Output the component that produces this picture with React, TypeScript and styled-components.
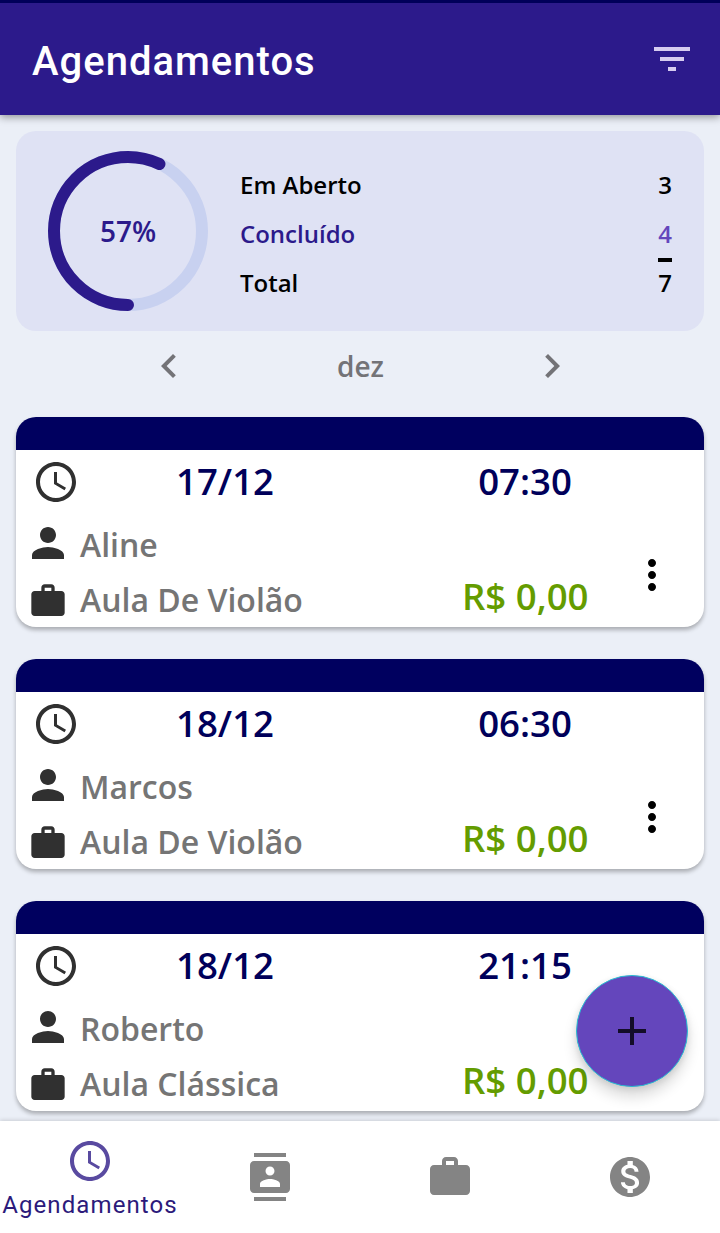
import React from "react";
import styled, { createGlobalStyle } from "styled-components";

const GlobalStyle = createGlobalStyle`
  * { box-sizing: border-box; }
  body { margin: 0; background: #ebeff7; }
  button { border: 0; padding: 0; background: none; color: inherit; font: inherit; }
`;

const icons = {
  clock:
    "M11.99 2C6.47 2 2 6.48 2 12s4.47 10 9.99 10C17.52 22 22 17.52 22 12S17.52 2 11.99 2zM12 20c-4.42 0-8-3.58-8-8s3.58-8 8-8 8 3.58 8 8-3.58 8-8 8zm.5-13H11v6l5.25 3.15.75-1.23-4.5-2.67z",
  person:
    "M12 12c2.21 0 4-1.79 4-4s-1.79-4-4-4-4 1.79-4 4 1.79 4 4 4zm0 2c-2.67 0-8 1.34-8 4v2h16v-2c0-2.66-5.33-4-8-4z",
  work:
    "M20 6h-4V4c0-1.11-.89-2-2-2h-4c-1.11 0-2 .89-2 2v2H4c-1.11 0-2 .89-2 2v11c0 1.11.89 2 2 2h16c1.11 0 2-.89 2-2V8c0-1.11-.89-2-2-2zm-6 0h-4V4h4v2z",
  contacts:
    "M20 0H4v2h16V0zM4 24h16v-2H4v2zM20 4H4c-1.1 0-2 .9-2 2v12c0 1.1.9 2 2 2h16c1.1 0 2-.9 2-2V6c0-1.1-.9-2-2-2zm-8 2.75c1.24 0 2.25 1.01 2.25 2.25s-1.01 2.25-2.25 2.25S9.75 10.24 9.75 9 10.76 6.75 12 6.75zM17 17H7v-1.5c0-1.67 3.33-2.5 5-2.5s5 .83 5 2.5V17z",
  money:
    "M12 2C6.48 2 2 6.48 2 12s4.48 10 10 10 10-4.48 10-10S17.52 2 12 2zm1.41 16.09V20h-2.67v-1.93c-1.71-.36-3.16-1.46-3.27-3.4h1.96c.1 1.05.82 1.87 2.65 1.87 1.96 0 2.4-.98 2.4-1.59 0-.83-.44-1.61-2.67-2.14-2.48-.6-4.18-1.62-4.18-3.67 0-1.72 1.39-2.84 3.11-3.21V4h2.67v1.95c1.86.45 2.79 1.86 2.85 3.39H14.3c-.05-1.11-.64-1.87-2.22-1.87-1.5 0-2.4.68-2.4 1.64 0 .84.65 1.39 2.67 1.91s4.18 1.39 4.18 3.91c-.01 1.83-1.38 2.83-3.12 3.16z",
  more:
    "M12 8c1.1 0 2-.9 2-2s-.9-2-2-2-2 .9-2 2 .9 2 2 2zm0 2c-1.1 0-2 .9-2 2s.9 2 2 2 2-.9 2-2-.9-2-2-2zm0 6c-1.1 0-2 .9-2 2s.9 2 2 2 2-.9 2-2-.9-2-2-2z",
  filter: "M10 18h4v-2h-4v2zM3 6v2h18V6H3zm3 7h12v-2H6v2z",
  add: "M19 13h-6v6h-2v-6H5v-2h6V5h2v6h6v2z",
  left: "M15.41 7.41L14 6l-6 6 6 6 1.41-1.41L10.83 12z",
  right: "M10 6L8.59 7.41 13.17 12l-4.58 4.59L10 18l6-6z",
};

const Glyph = styled.svg`
  display: block;
  flex: none;
  fill: currentColor;
`;

function Icon({ name, size = 48 }: { name: keyof typeof icons; size?: number }) {
  return (
    <Glyph width={size} height={size} viewBox="0 0 24 24" aria-hidden="true">
      <path d={icons[name]} />
    </Glyph>
  );
}

const Screen = styled.div`
  position: relative;
  display: flex;
  flex-direction: column;
  width: 720px;
  height: 1233px;
  overflow: hidden;
  background: #ebeff7;
  font-family: "Open Sans", sans-serif;
  font-weight: 600;
`;

const AppBar = styled.header`
  display: flex;
  flex: none;
  align-items: center;
  justify-content: space-between;
  height: 115px;
  padding: 0 24px 0 32px;
  border-top: 3px solid #00005a;
  background: #2c1a8b;
  color: #d6ccf0;
  box-shadow: 0 2px 8px rgba(0, 0, 0, 0.4);
`;

const Title = styled.h1`
  margin: 0;
  padding-top: 5px;
  color: #fff;
  font: 500 40px/48px Roboto, sans-serif;
  letter-spacing: 1px;
`;

const Content = styled.main`
  flex: 1;
  min-height: 0;
  padding: 16px 16px 0;
  overflow: hidden;
`;

const Summary = styled.section`
  display: flex;
  align-items: center;
  gap: 32px;
  height: 200px;
  padding: 0 32px;
  border-radius: 20px;
  background: #dfe2f4;
`;

const Ring = styled.div`
  display: grid;
  width: 160px;
  height: 160px;
  place-items: center;

  > * {
    grid-area: 1 / 1;
  }
`;

const Percent = styled.span`
  color: #2c1a8b;
  font-size: 28px;
  line-height: 38px;
`;

const Totals = styled.dl`
  flex: 1;
  margin: 0;
  padding-top: 5px;
`;

const TotalRow = styled.div<{ $color?: string }>`
  display: flex;
  justify-content: space-between;
  height: 49px;
  color: ${(p) => p.$color ?? "#000"};
  font-size: 24px;
  line-height: 49px;
`;

const Amount = styled.dd<{ $color?: string; $ruled?: boolean }>`
  margin: 0;
  color: ${(p) => p.$color ?? "inherit"};

  &::before {
    content: "";
    display: ${(p) => (p.$ruled ? "block" : "none")};
    height: 4px;
    margin-bottom: -4px;
    background: #000;
  }
`;

const MonthPicker = styled.nav`
  display: flex;
  align-items: center;
  justify-content: space-between;
  height: 86px;
  padding: 0 128px 16px 129px;
  color: #737377;
  font-size: 28px;
`;

const CardList = styled.div`
  display: flex;
  flex-direction: column;
  gap: 32px;
`;

const Card = styled.article`
  height: 210px;
  border-radius: 20px;
  border-top: 33px solid #00005f;
  background: #fff;
  box-shadow: 0 3px 4px rgba(0, 0, 0, 0.28);
`;

const When = styled.div`
  display: grid;
  grid-template-columns: 43px 300px 300px;
  align-items: center;
  height: 64px;
  padding-left: 16px;
  color: #00005a;
  font-size: 36.6px;
  line-height: 48px;
  text-align: center;
`;

const Moment = styled.span`
  padding-bottom: 2px;
`;

const Dark = styled.span`
  color: #303030;
`;

const Details = styled.div`
  display: grid;
  grid-template-columns: 1fr 130px 112px;
  height: 113px;
`;

const People = styled.div`
  display: flex;
  flex-direction: column;
  color: #757575;
`;

const Line = styled.div<{ $height: number }>`
  display: grid;
  grid-template-columns: 64px 1fr;
  align-items: center;
  height: ${(p) => p.$height}px;
  font-size: 32px;
  line-height: 44px;
`;

const IconSlot = styled(Dark)<{ $top?: number; $bottom?: number }>`
  display: grid;
  padding-top: ${(p) => p.$top ?? 0}px;
  padding-bottom: ${(p) => p.$bottom ?? 0}px;
  place-items: center;
`;

const Price = styled.div`
  align-self: end;
  padding-bottom: 6px;
  color: #649c00;
  font-size: 36.6px;
  line-height: 49px;
  white-space: nowrap;
`;

const MoreButton = styled.button`
  display: grid;
  height: 48px;
  margin-top: 37px;
  padding-left: 8px;
  place-items: center;
  justify-content: center;
  color: #000;
`;

const AddButton = styled.button`
  position: absolute;
  left: 576px;
  top: 975px;
  display: grid;
  width: 112px;
  height: 112px;
  place-items: center;
  border: 1px solid #28bcd2;
  border-radius: 50%;
  background: #6446bc;
  color: #130d28;
  box-shadow: 0 10px 14px rgba(0, 0, 0, 0.14), 0 2px 6px rgba(0, 0, 0, 0.1);
`;

const TabBar = styled.nav`
  position: relative;
  display: grid;
  flex: none;
  grid-template-columns: repeat(4, minmax(0, 1fr));
  height: 112px;
  background: #fff;
  box-shadow: 0 -1px 4px rgba(0, 0, 0, 0.14);
`;

const Tab = styled.button<{ $active?: boolean }>`
  display: flex;
  flex-direction: column;
  align-items: center;
  justify-content: ${(p) => (p.$active ? "flex-start" : "center")};
  padding-top: ${(p) => (p.$active ? 16 : 0)}px;
  color: ${(p) => (p.$active ? "#594aa0" : "#848484")};
`;

const TabLabel = styled.span`
  margin-top: 5px;
  color: #2c1a7b;
  font: 400 24px/30px Roboto, sans-serif;
  letter-spacing: 1.1px;
`;

const appointments = [
  { date: "17/12", time: "07:30", client: "Aline", service: "Aula De Violão", price: "R$ 0,00" },
  { date: "18/12", time: "06:30", client: "Marcos", service: "Aula De Violão", price: "R$ 0,00" },
  { date: "18/12", time: "21:15", client: "Roberto", service: "Aula Clássica", price: "R$ 0,00" },
];

function Progress({ percent }: { percent: number }) {
  return (
    <Ring>
      <svg width="160" height="160" viewBox="0 0 160 160" fill="none" strokeWidth="12">
        <circle cx="80" cy="80" r="74" stroke="#c8d1f0" />
        <circle
          cx="80"
          cy="80"
          r="74"
          stroke="#2c1a8b"
          strokeLinecap="round"
          pathLength="100"
          strokeDasharray={`${percent} 100`}
          transform="rotate(90 80 80)"
        />
      </svg>
      <Percent>{percent}%</Percent>
    </Ring>
  );
}

export default function App() {
  return (
    <Screen>
      <GlobalStyle />
      <AppBar>
        <Title>Agendamentos</Title>
        <button aria-label="Filtrar">
          <Icon name="filter" />
        </button>
      </AppBar>
      <Content>
        <Summary>
          <Progress percent={57} />
          <Totals>
            <TotalRow>
              <dt>Em Aberto</dt>
              <Amount>3</Amount>
            </TotalRow>
            <TotalRow $color="#2c1a8b">
              <dt>Concluído</dt>
              <Amount $color="#6446bc">4</Amount>
            </TotalRow>
            <TotalRow>
              <dt>Total</dt>
              <Amount $ruled>7</Amount>
            </TotalRow>
          </Totals>
        </Summary>
        <MonthPicker>
          <button aria-label="Mês anterior">
            <Icon name="left" />
          </button>
          <span>dez</span>
          <button aria-label="Próximo mês">
            <Icon name="right" />
          </button>
        </MonthPicker>
        <CardList>
          {appointments.map((item) => (
            <Card key={item.client}>
              <When>
                <Dark>
                  <Icon name="clock" />
                </Dark>
                <Moment>{item.date}</Moment>
                <Moment>{item.time}</Moment>
              </When>
              <Details>
                <People>
                  <Line $height={62}>
                    <IconSlot $bottom={4}>
                      <Icon name="person" />
                    </IconSlot>
                    {item.client}
                  </Line>
                  <Line $height={48}>
                    <IconSlot $top={2}>
                      <Icon name="work" size={40} />
                    </IconSlot>
                    {item.service}
                  </Line>
                </People>
                <Price>{item.price}</Price>
                <MoreButton aria-label="Opções">
                  <Icon name="more" />
                </MoreButton>
              </Details>
            </Card>
          ))}
        </CardList>
      </Content>
      <TabBar>
        <Tab $active>
          <Icon name="clock" />
          <TabLabel>Agendamentos</TabLabel>
        </Tab>
        <Tab aria-label="Clientes">
          <Icon name="contacts" />
        </Tab>
        <Tab aria-label="Serviços">
          <Icon name="work" />
        </Tab>
        <Tab aria-label="Financeiro">
          <Icon name="money" />
        </Tab>
      </TabBar>
      <AddButton aria-label="Novo agendamento">
        <Icon name="add" />
      </AddButton>
    </Screen>
  );
}
